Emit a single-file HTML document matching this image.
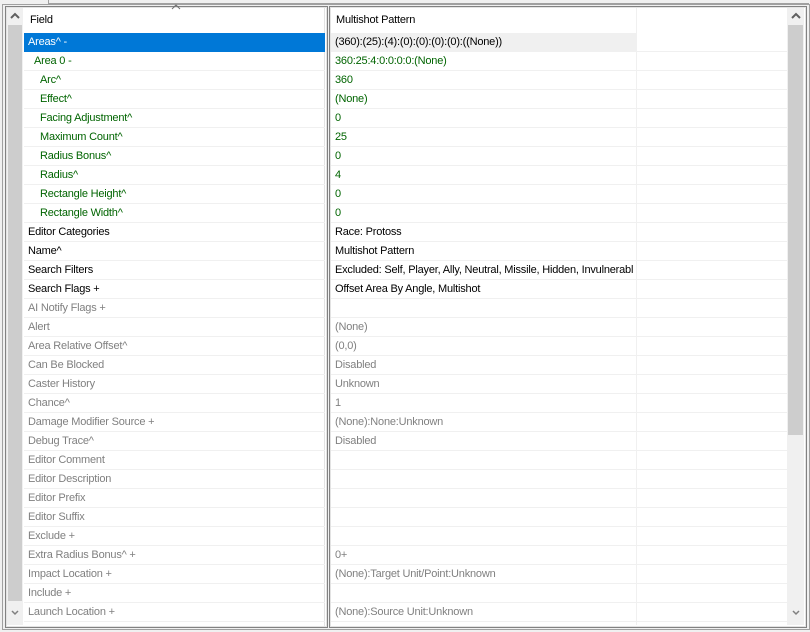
<!DOCTYPE html><html><head><style>
body{margin:0;width:810px;height:632px;background:#f0f0f0;position:relative;overflow:hidden;font-family:"Liberation Sans",sans-serif;font-size:11px;letter-spacing:-0.2px}
.a{position:absolute}
.pane{position:absolute;background:#fff;border:1px solid #828282;box-shadow:0 0 0 1px #e3e3e3 inset}
.row{position:absolute;height:18px;border-bottom:1px solid #f0f0f0;line-height:19px;white-space:nowrap;overflow:hidden}
.g{color:#006400}.k{color:#000}.m{color:#808080}
</style></head><body>
<div class="a" style="left:48px;top:0;width:760px;height:3px;border-bottom:1px solid #a0a0a0;border-left:1px solid #a0a0a0"></div>
<div class="a" style="left:2px;top:4px;width:806px;height:624px;border:1px solid #a0a0a0"></div>
<div class="pane" style="left:5px;top:6px;width:321px;height:620px"></div>
<div class="pane" style="left:329px;top:6px;width:476px;height:620px"></div>
<div class="a" style="left:7px;top:8px;width:16px;height:617px;background:#f0f0f0"></div>
<div class="a" style="left:8px;top:25px;width:14px;height:576px;background:#cdcdcd"></div>
<svg class="a" style="left:10px;top:12px" width="10" height="8"><path d="M1 6 L5 2 L9 6" stroke="#606060" stroke-width="2" fill="none"/></svg>
<svg class="a" style="left:10px;top:609px" width="10" height="8"><path d="M2 2 L5 5 L8 2" stroke="#808080" stroke-width="1.5" fill="none"/></svg>
<div class="a" style="left:787px;top:8px;width:17px;height:617px;background:#f0f0f0"></div>
<div class="a" style="left:788px;top:25px;width:15px;height:410px;background:#cdcdcd"></div>
<svg class="a" style="left:791px;top:12px" width="10" height="8"><path d="M1 6 L5 2 L9 6" stroke="#606060" stroke-width="2" fill="none"/></svg>
<svg class="a" style="left:791px;top:609px" width="10" height="8"><path d="M2 2 L5 5 L8 2" stroke="#808080" stroke-width="1.5" fill="none"/></svg>
<div class="a" style="left:24px;top:8px;width:301px;height:25px;background:#fff"></div>
<div class="a" style="left:30px;top:14px;color:#000">Field</div>
<svg class="a" style="left:171px;top:4px" width="10" height="6"><path d="M1 5 L5 1 L9 5" stroke="#707070" stroke-width="1" fill="none"/></svg>
<div class="a" style="left:336px;top:14px;color:#000">Multishot Pattern</div>
<div class="a" style="left:636px;top:8px;width:1px;height:617px;background:#f0f0f0"></div>
<div class="a" style="left:324px;top:7px;width:1px;height:619px;background:#e3e3e3"></div>
<div class="a" style="left:24px;top:33px;width:301px;height:19px;background:#0078d7"></div>
<div class="a" style="left:331px;top:33px;width:305px;height:19px;background:#f0f0f0"></div>
<div id="L"></div>
<script>
var d=[["Areas^ -","(360):(25):(4):(0):(0):(0):(0):((None))",28,"w"],["Area 0 -","360:25:4:0:0:0:0:(None)",34,"g"],["Arc^","360",40,"g"],["Effect^","(None)",40,"g"],["Facing Adjustment^","0",40,"g"],["Maximum Count^","25",40,"g"],["Radius Bonus^","0",40,"g"],["Radius^","4",40,"g"],["Rectangle Height^","0",40,"g"],["Rectangle Width^","0",40,"g"],["Editor Categories","Race: Protoss",28,"k"],["Name^","Multishot Pattern",28,"k"],["Search Filters","Excluded: Self, Player, Ally, Neutral, Missile, Hidden, Invulnerable",28,"k"],["Search Flags +","Offset Area By Angle, Multishot",28,"k"],["AI Notify Flags +","",28,"m"],["Alert","(None)",28,"m"],["Area Relative Offset^","(0,0)",28,"m"],["Can Be Blocked","Disabled",28,"m"],["Caster History","Unknown",28,"m"],["Chance^","1",28,"m"],["Damage Modifier Source +","(None):None:Unknown",28,"m"],["Debug Trace^","Disabled",28,"m"],["Editor Comment","",28,"m"],["Editor Description","",28,"m"],["Editor Prefix","",28,"m"],["Editor Suffix","",28,"m"],["Exclude +","",28,"m"],["Extra Radius Bonus^ +","0+",28,"m"],["Impact Location +","(None):Target Unit/Point:Unknown",28,"m"],["Include +","",28,"m"],["Launch Location +","(None):Source Unit:Unknown",28,"m"]];
var h="";d.forEach(function(r,i){var t=33+i*19;var c=r[3]=="w"?"color:#fff":"";var cl=r[3]=="w"?"k":r[3];
h+='<div class="row '+cl+'" style="left:24px;top:'+t+'px;width:301px;'+(i==0?'border-color:#0078d7;':'')+'"><span style="position:absolute;left:'+(r[2]-24)+'px;'+c+'">'+r[0]+'</span></div>';
h+='<div class="row '+cl+'" style="left:331px;top:'+t+'px;width:456px;"><span style="position:absolute;left:4px;width:298px;overflow:hidden;'+(i==0?'color:#000':'')+'">'+r[1]+'</span></div>';});
document.getElementById("L").innerHTML=h;
</script>
</body></html>
